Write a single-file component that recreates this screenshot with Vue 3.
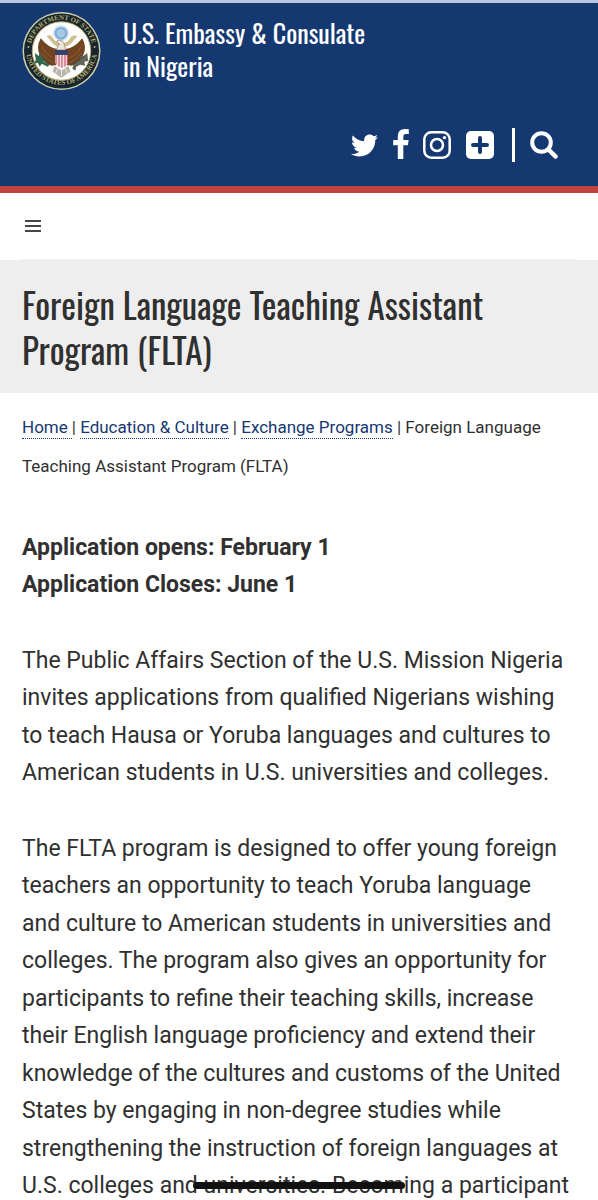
<script setup>
const socials = [
  { id: 'twitter', label: 'Twitter' },
  { id: 'facebook', label: 'Facebook' },
  { id: 'instagram', label: 'Instagram' },
  { id: 'more', label: 'More channels' },
]
</script>

<template>
  <div class="page">
    <header class="masthead">
      <a class="brand" href="#">
        <svg class="seal" viewBox="0 0 80 80" aria-hidden="true">
          <defs>
            <path id="arc-top" d="M8.4 40a31.6 31.6 0 0 1 63.2 0" />
            <path id="arc-bottom" d="M3.8 38a36.2 36.2 0 0 0 72.4 0" />
          </defs>
          <circle cx="40" cy="40" r="39.5" fill="#c9cfa9" />
          <circle cx="40" cy="40" r="38" fill="#17252f" />
          <circle cx="40" cy="40" r="29.6" fill="#fdfdfb" stroke="#b8ad72" stroke-width="1" />
          <g class="seal-text" fill="#b9ae69">
            <text text-anchor="middle"><textPath href="#arc-top" startOffset="50%">DEPARTMENT OF STATE</textPath></text>
            <text text-anchor="middle"><textPath href="#arc-bottom" startOffset="50%">UNITED STATES OF AMERICA</textPath></text>
          </g>
          <circle cx="6.5" cy="36" r="1" fill="#b9ae69" />
          <circle cx="73.5" cy="36" r="1" fill="#b9ae69" />
          <path d="M25 25q4-3 7 3 4 5 8 3 5 2 8-3 3-5 8-3-2 2-5 6-4 5-11 5t-10-5q-3-4-5-6z" fill="#cdbf8f" />
          <circle cx="39.5" cy="22" r="8.3" fill="#dce9f4" />
          <circle cx="39.5" cy="22" r="6.6" fill="#82afd8" />
          <circle cx="39.5" cy="22" r="3.6" fill="#a4c7e5" stroke="#d6e6f3" stroke-width="1" stroke-dasharray="1 1" />
          <path d="M19 27q-5 9-1 17 2 7 12 11l6-1v-16q-9-1-17-11z" fill="#714321" />
          <path d="M61 27q5 9 1 17-2 7-12 11l-6-1v-16q9-1 17-11z" fill="#714321" />
          <path d="M20 35q3 8 12 12M20 42q4 7 12 10M60 35q-3 8-12 12M60 42q-4 7-12 10" fill="none" stroke="#8d5c36" stroke-width="1" />
          <path d="M35 39q1-5 3-6-3-1-3-3 3-2 6 0 3 3 3 9z" fill="#e9e4d7" stroke="#8d704f" stroke-width=".6" />
          <path d="M33 55l7 5 7-5 2 6-9 6-9-6z" fill="#b9b5aa" />
          <path d="M36 58l-2 5M40 59v6M44 58l2 5" stroke="#ebe9e2" stroke-width="1" />
          <path d="M33.5 39h13v5h-13z" fill="#31426f" />
          <path d="M33.5 44h13v8q-2 4-6.5 5-4.5-1-6.5-5z" fill="#f3dfe2" />
          <path d="M34.5 44v9M37.5 44v12M40.5 44v13M43.5 44v12M46 44v9" stroke="#c75a6c" stroke-width="1.2" />
          <path d="M13 42l4 3 1-4 2 5 4 1-3 3 7 4-2 2-6-3-2 3-2-4-4 1 2-4z" fill="#31674b" />
          <path d="M66 42l-5 4-2-1-1 4-6 5-1 4 3 2 1-4 4-2 5 1-1-4 4-1z" fill="#65645a" />
          <path d="M28 52l-8-4M51 54l12-9" stroke="#334b3e" stroke-width="1" />
        </svg>
        <span class="brand-name">U.S. Embassy &amp; Consulate<br />in Nigeria</span>
      </a>

      <div class="tools">
        <a v-for="s in socials" :key="s.id" href="#" :class="['tool', s.id]" :aria-label="s.label">
          <svg v-if="s.id === 'twitter'" viewBox="0 2 24 20">
            <path d="M23.954 4.569c-.885.389-1.830.654-2.825.775 1.014-.611 1.794-1.574 2.163-2.723-.951.555-2.005.959-3.127 1.184-.896-.959-2.173-1.559-3.591-1.559-2.717 0-4.920 2.203-4.920 4.917 0 .390.045.765.127 1.124C7.691 8.094 4.066 6.130 1.640 3.161c-.427.722-.666 1.561-.666 2.475 0 1.710.870 3.213 2.188 4.096-.807-.026-1.566-.248-2.228-.616v.061c0 2.385 1.693 4.374 3.946 4.827-.413.111-.849.171-1.296.171-.314 0-.615-.030-.916-.086.631 1.953 2.445 3.377 4.604 3.417-1.680 1.319-3.809 2.105-6.102 2.105-.390 0-.779-.023-1.170-.067 2.189 1.394 4.768 2.209 7.557 2.209 9.054 0 13.999-7.496 13.999-13.986 0-.209 0-.420-.015-.630.961-.689 1.800-1.560 2.460-2.548z" />
          </svg>
          <svg v-else-if="s.id === 'facebook'" viewBox="95 0 864 1664">
            <path d="M959 12v264h-157q-86 0-116 36t-30 108v189h293l-39 296h-254v759h-306v-759h-255v-296h255v-218q0-186 104-288.5t277-102.5q147 0 228 12z" />
          </svg>
          <svg v-else-if="s.id === 'instagram'" viewBox="0 0 28 28">
            <rect x="1.3" y="1.3" width="25.4" height="25.4" rx="7" fill="none" stroke="currentColor" stroke-width="2.5" />
            <circle cx="14" cy="14" r="6" fill="none" stroke="currentColor" stroke-width="2.5" />
            <circle cx="21.5" cy="6.6" r="1.7" />
          </svg>
          <svg v-else viewBox="0 0 28 28">
            <rect width="28" height="28" rx="5" />
            <path class="cut" d="M14 7v14M7 14h14" />
          </svg>
        </a>
        <span class="divider"></span>
        <button class="tool search" type="button" aria-label="Search">
          <svg viewBox="0 0 28 28">
            <circle cx="11.5" cy="11.5" r="9.3" fill="none" stroke="currentColor" stroke-width="4" />
            <path d="M18.5 18.5l7 7" fill="none" stroke="currentColor" stroke-width="4.5" stroke-linecap="round" />
          </svg>
        </button>
      </div>
    </header>

    <nav class="menu-bar">
      <button class="menu" type="button" aria-label="Menu"><i></i><i></i><i></i></button>
    </nav>

    <div class="title-band">
      <h1>Foreign Language Teaching Assistant Program (FLTA)</h1>
    </div>

    <main>
      <nav class="crumbs" aria-label="Breadcrumb">
        <a class="home" href="#">Home</a>| <a href="#">Education &amp; Culture</a> | <a href="#">Exchange Programs</a> | Foreign Language Teaching Assistant Program (FLTA)
      </nav>
      <article>
        <p><strong>Application opens: February 1<br />Application Closes: June 1</strong></p>
        <p>The Public Affairs Section of the U.S. Mission Nigeria invites applications from qualified Nigerians wishing to teach Hausa or Yoruba languages and cultures to American students in U.S. universities and colleges.</p>
        <p>The FLTA program is designed to offer young foreign teachers an opportunity to teach Yoruba language and culture to American students in universities and colleges. The program also gives an opportunity for participants to refine their teaching skills, increase their English language proficiency and extend their knowledge of the cultures and customs of the United States by engaging in non-degree studies while strengthening the instruction of foreign languages at U.S. colleges and universities. Becoming a participant</p>
      </article>
    </main>
    <div class="home-indicator"></div>
  </div>
</template>

<style>
body {
  background: #fff;
}
</style>

<style scoped>
.page {
  color: #303030;
  font-family: Roboto, "Liberation Sans", sans-serif;
}
.masthead {
  box-sizing: border-box;
  padding: 8px 40px 23px 22px;
  border-top: 3px solid #bac6e0;
  border-bottom: 7px solid #bf423f;
  background: #153871;
  color: #fff;
}
.brand {
  display: flex;
  gap: 22px;
  color: #fff;
  text-decoration: none;
}
.seal {
  width: 79px;
  height: 80px;
}
.seal-text {
  font: bold 7px "Liberation Serif", serif;
}
.brand-name,
h1 {
  font-family: Oswald, "Liberation Sans Narrow", "Liberation Sans", sans-serif;
  font-weight: 400;
}
.brand-name {
  padding-top: 5px;
  font-size: 26px;
  line-height: 33px;
}
.tools {
  display: flex;
  align-items: center;
  justify-content: flex-end;
  height: 36px;
  margin-top: 36px;
}
.tool {
  display: block;
  padding: 0;
  border: 0;
  background: none;
  color: #fff;
}
.tool svg {
  display: block;
  width: 100%;
  height: 100%;
  fill: currentColor;
}
.twitter {
  width: 27px;
  height: 23px;
  margin-right: 15px;
}
.facebook {
  width: 16px;
  height: 30px;
  margin: 0 14px 2px 0;
}
.instagram {
  width: 28px;
  height: 28px;
  margin-right: 15px;
}
.more {
  width: 28px;
  height: 28px;
}
.cut {
  fill: none;
  stroke: #153871;
  stroke-width: 4;
  stroke-linecap: round;
}
.divider {
  width: 3px;
  height: 34px;
  margin: 0 15px 0 18px;
  background: #fff;
}
.search {
  width: 28px;
  height: 28px;
}
.menu-bar {
  display: flex;
  align-items: center;
  height: 66px;
  margin: 0 22px;
  border-bottom: 1px solid #eee;
}
.menu {
  display: flex;
  flex-direction: column;
  gap: 3px;
  width: 22px;
  padding: 0 3px;
  border: 0;
  background: none;
}
.menu i {
  height: 2px;
  background: #464646;
}
.title-band {
  padding: 22px 22px 21px;
  background: #eee;
}
h1 {
  margin: 0;
  font-size: 35px;
  line-height: 45px;
}
main {
  padding: 15px 26px 0 22px;
}
.crumbs {
  font-size: 17px;
  line-height: 39px;
}
.crumbs a {
  padding-bottom: 1px;
  border-bottom: 1px dotted #153871;
  color: #153871;
  text-decoration: none;
}
.crumbs .home {
  padding-right: 4px;
}
article {
  padding-top: 43px;
  font-size: 23px;
  line-height: 1.63;
}
p {
  margin: 0 0 38px;
}
.home-indicator {
  position: fixed;
  bottom: 11px;
  left: 50%;
  width: 212px;
  height: 7px;
  margin-left: -106px;
  border-radius: 4px;
  background: #111;
}
</style>
